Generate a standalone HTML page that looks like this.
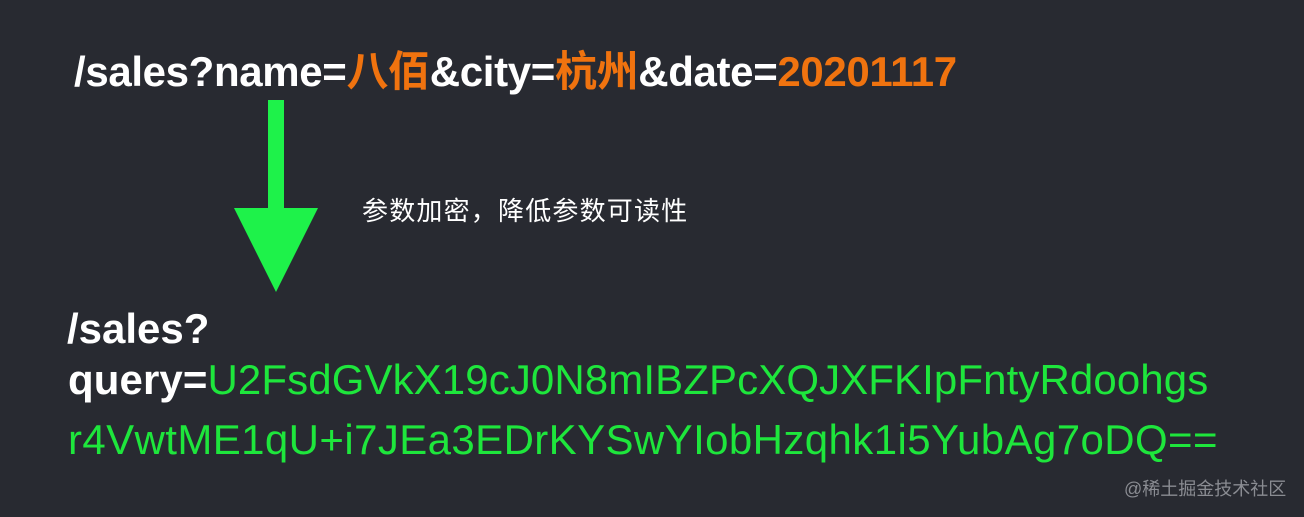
<!DOCTYPE html>
<html><head><meta charset="utf-8"><style>
html,body{margin:0;padding:0}
body{width:1304px;height:517px;background:#282a31;position:relative;overflow:hidden;font-family:"Liberation Sans","Noto Sans CJK SC",sans-serif}
.t{position:absolute;white-space:nowrap;line-height:1}
.w{color:#fff}.o{color:#f0730f}.g{color:#1ee63c}
</style></head><body>
<div class="t w" style="left:74px;top:51px;font-size:42px;font-weight:bold;letter-spacing:-0.35px">/sales?name=<span class="o">八佰</span>&amp;city=<span class="o">杭州</span>&amp;date=<span class="o">20201117</span></div>
<svg style="position:absolute;left:0;top:0" width="1304" height="517">
<rect x="268" y="100" width="16" height="110" fill="#1ef24a"/>
<polygon points="234,208 318,208 276,292" fill="#1ef24a"/>
</svg>
<div class="t w" style="left:362px;top:198px;font-size:26px;letter-spacing:1.2px">参数加密，降低参数可读性</div>
<div class="t w" style="left:67px;top:308px;font-size:42px;font-weight:bold">/sales?</div>
<div class="t" style="left:68px;top:359px;font-size:42px;letter-spacing:0.1px"><span class="w" style="font-weight:bold">query=</span><span class="g">U2FsdGVkX19cJ0N8mIBZPcXQJXFKIpFntyRdoohgs</span></div>
<div class="t g" style="left:68px;top:419px;font-size:42px;letter-spacing:0.4px">r4VwtME1qU+i7JEa3EDrKYSwYIobHzqhk1i5YubAg7oDQ==</div>
<div class="t" style="left:1124px;top:480px;font-size:18px;color:#8a8c92">@稀土掘金技术社区</div>
</body></html>
